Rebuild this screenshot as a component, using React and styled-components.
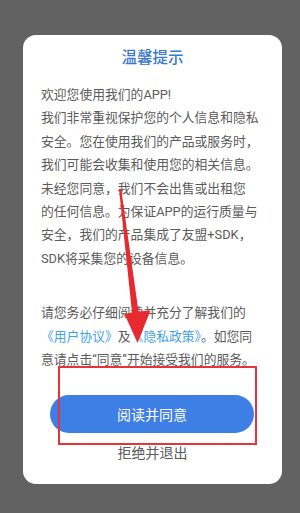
import React from 'react'
import styled, { createGlobalStyle } from 'styled-components'

const GlobalStyle = createGlobalStyle`
    html, body {
        margin: 0;
        padding: 0;
        background: #626262;
    }
    * {
        box-sizing: border-box;
    }
`

const firstPara = [
    '欢迎您使用我们的APP!',
    '我们非常重视保护您的个人信息和隐私',
    '安全。您在使用我们的产品或服务时，',
    '我们可能会收集和使用您的相关信息。',
    '未经您同意，我们不会出售或出租您',
    '的任何信息。为保证APP的运行质量与',
    '安全，我们的产品集成了友盟+SDK，',
    'SDK将采集您的设备信息。',
]

const App = () => {
    return (
        <Screen>
            <GlobalStyle />
            <Card>
                <Title>温馨提示</Title>
                <Para>
                    {firstPara.map((line, i) => (
                        <Line key={i}>{line}</Line>
                    ))}
                </Para>
                <Para gap={31}>
                    <Line>请您务必仔细阅读并充分了解我们的</Line>
                    <Line>
                        <Link>《用户协议》</Link>及<Link>《隐私政策》</Link>。如您同
                    </Line>
                    <Line>意请点击“同意”开始接受我们的服务。</Line>
                </Para>
                <AgreeButton>阅读并同意</AgreeButton>
                <RefuseButton>拒绝并退出</RefuseButton>
            </Card>
            <Highlight />
            <ArrowMark viewBox="0 0 300 513" width="300" height="513">
                <polygon
                    points="119,189 121.2,189 138.5,311.5 150.5,310.5 137.5,343 124.5,314 132,312.5"
                    fill="#e62a2f"
                />
            </ArrowMark>
        </Screen>
    )
}

const Screen = styled.div`
    position: relative;
    width: 300px;
    height: 513px;
    padding-top: 35px;
    background: #626262;
    font-family: Roboto, "Noto Sans CJK SC", sans-serif;
    overflow: hidden;
`

const Card = styled.div`
    width: 259px;
    margin-left: 23px;
    background: #ffffff;
    border-radius: 13px;
    padding: 12px 18px 21px;
    display: flex;
    flex-direction: column;
`

const Title = styled.div`
    text-align: center;
    font-size: 15.5px;
    line-height: 22px;
    font-weight: 500;
    color: #3b78d5;
    margin-bottom: 14px;
`

const Para = styled.div`
    margin-top: ${props => props.gap || 0}px;
    font-size: 12.8px;
    line-height: 23.4px;
    color: #5b5b5b;
`

const Line = styled.div`
    white-space: nowrap;
`

const Link = styled.span`
    color: #3fa2ea;
`

const AgreeButton = styled.button`
    margin: 24px 10px 0 9px;
    height: 38px;
    border: none;
    border-radius: 19px;
    background: #3d7fe4;
    color: #ffffff;
    font-family: inherit;
    font-size: 14px;
    cursor: pointer;
`

const RefuseButton = styled.button`
    margin-top: 10px;
    height: 20px;
    padding: 0;
    border: none;
    background: transparent;
    color: #5a5a5a;
    font-family: inherit;
    font-size: 14px;
    line-height: 20px;
    cursor: pointer;
`

const Highlight = styled.div`
    position: absolute;
    left: 58px;
    top: 366px;
    width: 199px;
    height: 79px;
    border: 2px solid #e5343a;
    pointer-events: none;
`

const ArrowMark = styled.svg`
    position: absolute;
    left: 0;
    top: 0;
    pointer-events: none;
`

export default App
